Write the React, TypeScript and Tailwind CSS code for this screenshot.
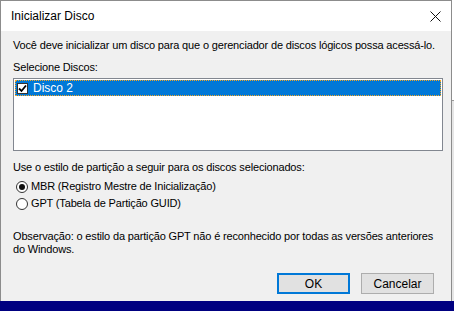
export default function App() {
  return (
    <div className="w-[454px] h-[311px] overflow-hidden bg-[#000080] font-['Liberation_Sans',Arial,sans-serif] text-[11px] tracking-[-0.16px] text-black">
      <div className="flex h-[301px]">
        {/* Dialog window */}
        <div className="w-[452px] h-[301px] border-x border-t border-[#8c8c8c] bg-[#f0f0f0] flex flex-col">
          {/* Title bar */}
          <div className="h-[30px] bg-white flex items-center justify-between pl-[10px] pr-[9px]">
            <span className="text-[12px] tracking-normal leading-none text-[#000]">Inicializar Disco</span>
            <svg width="11" height="11" viewBox="0 0 11 11" className="mr-[1px]">
              <path d="M0.5 0.5 L10.5 10.5 M10.5 0.5 L0.5 10.5" stroke="#111" strokeWidth="1" />
            </svg>
          </div>

          {/* Body */}
          <div className="flex flex-col pl-[12px] pr-[9px] pt-[8px] whitespace-nowrap">
            <p className="leading-[13px]">
              Você deve inicializar um disco para que o gerenciador de discos lógicos possa acessá-lo.
            </p>
            <p className="leading-[13px] mt-[9px]">Selecione Discos:</p>

            {/* List box */}
            <div className="mt-[4px] w-[430px] h-[73px] border border-[#828790] bg-white p-[1px]">
              <div className="h-[16px] bg-[#0078d7] border border-dotted border-[#f5a623] flex items-center pl-[1px]">
                <span className="w-[11px] h-[11px] bg-white border border-[#333] flex items-center justify-center">
                  <svg width="9" height="9" viewBox="0 0 9 9">
                    <path d="M1 4.5 L3.5 7 L8 1.5" stroke="#000" strokeWidth="1.8" fill="none" />
                  </svg>
                </span>
                <span className="ml-[5px] text-white text-[12px] tracking-normal leading-none">Disco 2</span>
              </div>
            </div>

            <p className="leading-[13px] mt-[10px]">Use o estilo de partição a seguir para os discos selecionados:</p>

            {/* Radios */}
            <div className="mt-[4px] flex flex-col pl-[3px]">
              <label className="h-[17px] flex items-center">
                <span className="w-[12px] h-[12px] rounded-full border border-[#333] bg-white flex items-center justify-center">
                  <span className="w-[6px] h-[6px] rounded-full bg-[#111]" />
                </span>
                <span className="ml-[3px] leading-none">MBR (Registro Mestre de Inicialização)</span>
              </label>
              <label className="h-[17px] flex items-center">
                <span className="w-[12px] h-[12px] rounded-full border border-[#333] bg-white" />
                <span className="ml-[3px] leading-none">GPT (Tabela de Partição GUID)</span>
              </label>
            </div>

            <p className="leading-[13px] mt-[18px]">
              Observação: o estilo da partição GPT não é reconhecido por todas as versões anteriores
              <br />
              do Windows.
            </p>

            {/* Buttons */}
            <div className="mt-[17px] flex justify-end gap-[11px] pr-[8px]">
              <button className="w-[73px] h-[21px] bg-[#e1e1e1] border-2 border-[#0078d7] text-[12px] tracking-normal leading-none">
                OK
              </button>
              <button className="w-[73px] h-[21px] bg-[#e1e1e1] border border-[#adadad] text-[12px] tracking-normal leading-none">
                Cancelar
              </button>
            </div>
          </div>
        </div>

        {/* Desktop strip to the right */}
        <div className="w-[2px] h-full bg-[#f4f4f4] flex flex-col">
          <div className="h-[100px] bg-white" />
          <div className="h-[1px] bg-[#9a9a9a]" />
          <div className="flex-1 bg-[#e6e6e6]" />
        </div>
      </div>
    </div>
  )
}
